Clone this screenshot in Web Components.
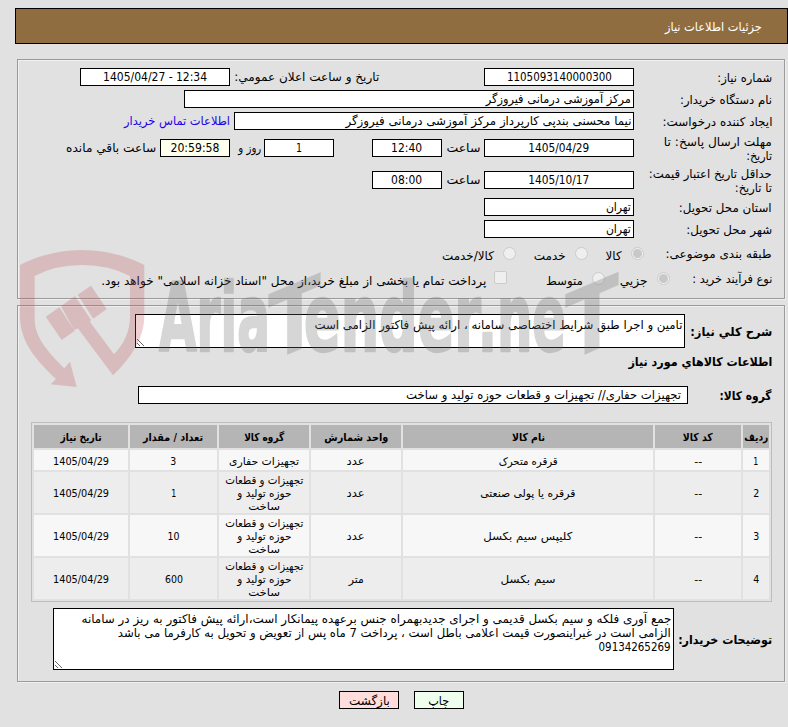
<!DOCTYPE html>
<html lang="fa" dir="rtl">
<head>
<meta charset="utf-8">
<title>جزئیات اطلاعات نیاز</title>
<style>
    body {
        margin: 0;
        background: #e1e1e1;
        color: #000;
        font-family: "DejaVu Sans Condensed", "DejaVu Sans", sans-serif;
        font-size: 12px;
        line-height: 14px;
    }
    need-page { --line: #000; }
    a { color: #2200e8; text-decoration: none; }
</style>
</head>
<body>
<need-page>
    <page-title slot="title"><fit-text w="97">جزئیات اطلاعات نیاز</fit-text></page-title>

    <field-panel style="height: 241px">
        <form-row h="22">
            <fit-text slot="label" w="55">شماره نیاز:</fit-text>
            <value-box w="150" center><fit-text w="105">1105093140000300</fit-text></value-box>
            <fit-text w="145" style="margin-right: 105px">تاریخ و ساعت اعلان عمومي:</fit-text>
            <value-box w="150" center style="margin-right: 4px"><fit-text w="104" dir="ltr">1405/04/27 - 12:34</fit-text></value-box>
        </form-row>
        <form-row h="22">
            <fit-text slot="label" w="92">نام دستگاه خریدار:</fit-text>
            <value-box w="450"><fit-text w="145">مرکز آموزشی درمانی فیروزگر</fit-text></value-box>
        </form-row>
        <form-row h="22">
            <fit-text slot="label" w="110">ایجاد کننده درخواست:</fit-text>
            <value-box w="400"><fit-text w="286">نیما محسنی بندپی کارپرداز مرکز آموزشی درمانی فیروزگر</fit-text></value-box>
            <a style="margin-right: 4px"><fit-text w="106">اطلاعات تماس خریدار</fit-text></a>
        </form-row>
        <form-row h="32">
            <fit-text slot="label" w="108">مهلت ارسال پاسخ: تا</fit-text>
            <fit-text slot="label" w="26">تاریخ:</fit-text>
            <value-box w="150" center><fit-text w="61">1405/04/29</fit-text></value-box>
            <fit-text w="34" style="margin-right: 4px">ساعت</fit-text>
            <value-box w="70" center style="margin-right: 4px"><fit-text w="31">12:40</fit-text></value-box>
            <value-box w="70" center style="margin-right: 38px"><fit-text w="6">1</fit-text></value-box>
            <fit-text w="23" style="margin-right: 3px">روز و</fit-text>
            <value-box w="70" center tone="cream" style="margin-right: 8px"><fit-text w="49">20:59:58</fit-text></value-box>
            <fit-text w="90" style="margin-right: 4px">ساعت باقي مانده</fit-text>
        </form-row>
        <form-row h="32">
            <fit-text slot="label" w="123">حداقل تاریخ اعتبار قیمت:</fit-text>
            <fit-text slot="label" w="37">تا تاریخ:</fit-text>
            <value-box w="150" center><fit-text w="61">1405/10/17</fit-text></value-box>
            <fit-text w="34" style="margin-right: 4px">ساعت</fit-text>
            <value-box w="70" center style="margin-right: 4px"><fit-text w="31">08:00</fit-text></value-box>
        </form-row>
        <form-row h="22">
            <fit-text slot="label" w="93">استان محل تحویل:</fit-text>
            <value-box w="150"><fit-text w="25">تهران</fit-text></value-box>
        </form-row>
        <form-row h="22">
            <fit-text slot="label" w="86">شهر محل تحویل:</fit-text>
            <value-box w="150"><fit-text w="25">تهران</fit-text></value-box>
        </form-row>
        <form-row h="27" label-width="128">
            <fit-text slot="label" w="106">طبقه بندی موضوعی:</fit-text>
            <choice-mark checked><fit-text w="16">کالا</fit-text></choice-mark>
            <choice-mark style="margin-right: 18px"><fit-text w="32">خدمت</fit-text></choice-mark>
            <choice-mark style="margin-right: 18px"><fit-text w="52">کالا/خدمت</fit-text></choice-mark>
        </form-row>
        <form-row h="23" label-width="102">
            <fit-text slot="label" w="80">نوع فرآیند خرید :</fit-text>
            <choice-mark checked><fit-text w="28">جزیي</fit-text></choice-mark>
            <choice-mark style="margin-right: 15px"><fit-text w="37">متوسط</fit-text></choice-mark>
            <choice-mark square style="margin-right: 39px"><fit-text w="385">پرداخت تمام یا بخشی از مبلغ خرید،از محل "اسناد خزانه اسلامی" خواهد بود.</fit-text></choice-mark>
        </form-row>
    </field-panel>

    <field-panel style="height: 378px">
        <form-row h="38" bold label-width="87">
            <fit-text slot="label" w="82">شرح كلي نیاز:</fit-text>
            <note-box w="550" h="34"><fit-text w="368">تامین و اجرا طبق شرایط اختصاصی سامانه ، ارائه پیش فاکتور الزامی است</fit-text></note-box>
        </form-row>
        <form-row h="22" bold label-width="145">
            <fit-text slot="label" w="144">اطلاعات کالاهاي مورد نیاز</fit-text>
        </form-row>
        <form-row h="46" bold label-width="84">
            <fit-text slot="label" w="52">گروه کالا:</fit-text>
            <value-box w="550" inset="6"><fit-text w="275">تجهیزات حفاری// تجهیزات و قطعات حوزه تولید و ساخت</fit-text></value-box>
        </form-row>
        <goods-table style="margin-top: 4px"></goods-table>
        <form-row h="62" bold label-width="98" style="margin-top: 6px">
            <fit-text slot="label" w="94">توضیحات خریدار:</fit-text>
            <note-box w="621" h="62">
                <fit-text w="590">جمع آوری فلکه و سیم بکسل قدیمی و اجرای جدیدبهمراه جنس برعهده پیمانکار است،ارائه پیش فاکتور به ریز در سامانه</fit-text>
                <fit-text w="553">الزامی است در غیراینصورت قیمت اعلامی باطل است ، پرداخت 7 ماه پس از تعویض و تحویل به کارفرما می باشد</fit-text>
                <fit-text w="72">09134265269</fit-text>
            </note-box>
        </form-row>
    </field-panel>

    <action-button slot="actions" w="50" tone="green"><fit-text w="21">چاپ</fit-text></action-button>
    <action-button slot="actions" w="60" tone="red"><fit-text w="41">بازگشت</fit-text></action-button>
</need-page>

<script>
function shadow(el, html) {
    const root = el.attachShadow({ mode: 'open' });
    const template = document.createElement('template');
    template.innerHTML = html;
    root.appendChild(template.content.cloneNode(true));
    return root;
}

class NeedPage extends HTMLElement {
    constructor() {
        super();
        shadow(this, `
            <style>
                :host { display: block; position: relative; width: 788px; height: 727px; overflow: hidden; }
                .title { padding: 8px 0 0 15px; }
                .panels { display: flex; flex-direction: column; gap: 5px; padding: 15px 2px 0 17px; }
                .actions { display: flex; justify-content: center; gap: 15px; padding: 8px 0 0 0; margin-left: 15px; }
            </style>
            <div class="title"><slot name="title"></slot></div>
            <div class="panels"><slot></slot></div>
            <div class="actions"><slot name="actions"></slot></div>
            <brand-watermark></brand-watermark>
        `);
    }
}

// One line of text squeezed or stretched to a given width
class FitText extends HTMLElement {
    constructor() {
        super();
        shadow(this, `
            <style>
                :host { display: inline-block; flex: none; white-space: nowrap; }
                span { display: inline-block; transform-origin: 100% 50%; }
            </style>
            <span><slot></slot></span>
        `);
    }

    connectedCallback() {
        const width = Number(this.getAttribute('w'));
        const span = this.shadowRoot.querySelector('span');
        this.style.width = width + 'px';
        this.style.direction = 'rtl';
        if (this.getAttribute('dir') === 'ltr') span.style.direction = 'ltr';
        const natural = span.getBoundingClientRect().width;
        if (natural > 0) span.style.transform = `scaleX(${width / natural})`;
    }
}

class PageTitle extends HTMLElement {
    constructor() {
        super();
        shadow(this, `
            <style>
                :host {
                    display: flex; align-items: center; box-sizing: border-box; height: 36px;
                    padding: 2px 25px 0 0; border: 1px solid #000;
                    background: #8f6d40; color: #fff;
                }
            </style>
            <slot></slot>
        `);
    }
}

class FieldPanel extends HTMLElement {
    constructor() {
        super();
        shadow(this, `
            <style>
                :host {
                    display: block; box-sizing: border-box; padding: 5px 11px 0 0;
                    border: 1px solid #9a9a9a;
                    box-shadow: 1px 1px 0 #f0f0f0, inset 1px 1px 0 #f0f0f0;
                    margin: 0 1px 1px 0;
                }
                div { padding: 1px 1px 0 0; }
            </style>
            <div><slot></slot></div>
        `);
        this.style.height = parseInt(this.style.height, 10) - 1 + 'px';
    }
}

class FormRow extends HTMLElement {
    constructor() {
        super();
        shadow(this, `
            <style>
                :host { display: flex; align-items: center; }
                .label { display: flex; flex-direction: column; align-items: flex-start; flex: none; padding-top: 1px; }
                :host([bold]) .label { font-weight: bold; }
            </style>
            <div class="label"><slot name="label"></slot></div>
            <slot></slot>
        `);
        this.style.height = this.getAttribute('h') + 'px';
        this.shadowRoot.querySelector('.label').style.width = (this.getAttribute('label-width') || 138) + 'px';
    }
}

class ValueBox extends HTMLElement {
    constructor() {
        super();
        shadow(this, `
            <style>
                :host {
                    display: flex; align-items: center; flex: none; box-sizing: border-box; height: 18px;
                    padding: 0 2px; border: 1px solid var(--line); background: #fff; color: #000;
                }
                :host([center]) { justify-content: center; }
                :host([tone="cream"]) { background: #ffffee; }
            </style>
            <slot></slot>
        `);
        this.style.width = this.getAttribute('w') + 'px';
        if (this.hasAttribute('inset')) this.style.paddingRight = this.getAttribute('inset') + 'px';
    }
}

class NoteBox extends HTMLElement {
    constructor() {
        super();
        shadow(this, `
            <style>
                :host {
                    display: flex; flex-direction: column; align-items: flex-start; flex: none;
                    position: relative; box-sizing: border-box; padding: 3px 2px;
                    border: 1px solid var(--line); background: #fff;
                }
                svg { position: absolute; left: 1px; bottom: 1px; }
            </style>
            <slot></slot>
            <svg width="8" height="8" viewBox="0 0 8 8"><path d="M0 1l7 7M0 5l3 3" stroke="#555" stroke-width=".9"/></svg>
        `);
        this.style.width = this.getAttribute('w') + 'px';
        this.style.height = this.getAttribute('h') + 'px';
    }
}

// Disabled radio button or checkbox with its caption
class ChoiceMark extends HTMLElement {
    constructor() {
        super();
        shadow(this, `
            <style>
                :host { display: flex; align-items: center; gap: 9px; }
                i {
                    display: flex; align-items: center; justify-content: center; box-sizing: border-box;
                    width: 13px; height: 13px; border: 1px solid #cbcbcb; border-radius: 50%; background: #efefef;
                }
                :host([square]) { gap: 8px; }
                :host([square]) i { border-radius: 2px; margin-bottom: 2px; }
                :host([checked]) i::before { content: ""; width: 9px; height: 9px; border-radius: 50%; background: #c8c8c8; }
                .text { padding-top: 4px; }
            </style>
            <i></i><div class="text"><slot></slot></div>
        `);
    }
}

class GoodsTable extends HTMLElement {
    constructor() {
        super();
        const long = [['تجهیزات و قطعات', 78], ['حوزه تولید و', 54], ['ساخت', 32]];
        const rows = [
            [[['1', 5]], [['قرقره متحرک', 59]], [['عدد', 18]], [['تجهیزات حفاری', 70]], [['3', 6]]],
            [[['2', 6]], [['قرقره یا پولی صنعتی', 95]], [['عدد', 18]], long, [['1', 5]]],
            [[['3', 6]], [['کلیپس سیم بکسل', 89]], [['عدد', 18]], long, [['10', 12]]],
            [[['4', 6]], [['سیم بکسل', 55]], [['متر', 15]], long, [['600', 18]]]
        ];
        const head = [['ردیف', 24], ['کد کالا', 30], ['نام کالا', 33], ['واحد شمارش', 64],
            ['گروه کالا', 40], ['تعداد / مقدار', 60], ['تاریخ نیاز', 41]];
        const fit = ([text, w]) => `<fit-text w="${w}">${text}</fit-text>`;
        const cell = (lines) => `<div>${lines.map(fit).join('')}</div>`;

        shadow(this, `
            <style>
                :host {
                    display: grid; gap: 2px; box-sizing: border-box; width: 741px; height: 180px; padding: 2px;
                    grid-template-columns: 26px 86px 250px 90px 90px 87px 94px;
                    grid-template-rows: 23px 20px 41px 41px 41px;
                    border: 1px solid #bdbdbd; font-size: 11px; line-height: 13px;
                }
                div {
                    display: flex; flex-direction: column; align-items: center; justify-content: center;
                    box-sizing: border-box; padding-top: 2px; background: #f7f7f7;
                }
                .head { background: #b5b5b5; font-weight: bold; }
                .alt div { background: #ededed; }
                section { display: contents; }
            </style>
            ${head.map((h) => `<div class="head">${fit(h)}</div>`).join('')}
            ${rows.map((r, i) => `<section class="${i % 2 ? 'alt' : ''}">
                ${cell(r[0])}${cell([['--', 8]])}${r.slice(1).map(cell).join('')}${cell([['1405/04/29', 56]])}
            </section>`).join('')}
        `);
    }
}

class ActionButton extends HTMLElement {
    constructor() {
        super();
        shadow(this, `
            <style>
                :host {
                    display: flex; align-items: center; justify-content: center; box-sizing: border-box;
                    height: 18px; padding-top: 2px; border: 1px solid #000; background: #eeffee; cursor: pointer;
                }
                :host([tone="red"]) { background: #ffdddd; }
            </style>
            <slot></slot>
        `);
        this.style.width = this.getAttribute('w') + 'px';
    }
}

// Translucent logo lying over both panels
class BrandWatermark extends HTMLElement {
    constructor() {
        super();
        shadow(this, `
            <style>
                :host { position: absolute; left: 0; top: 240px; direction: ltr; pointer-events: none; }
                svg { display: block; }
                text { font: bold 94px "DejaVu Sans Condensed", "DejaVu Sans", sans-serif; }
            </style>
            <svg width="640" height="155" viewBox="0 240 640 155">
                <g fill="#be5055" opacity=".25">
                    <path d="M20 265Q49 250 82 250T144.300 265V316C144.300 338 131 358 113 375.300L78 328.500 74 329.700 61 306.300 75 296 91 320 90 322 114 354.300C124 344 130 331 130 317V276Q109 265 82 265T34.700 276V320C35 338 49 353 64.300 368.300L70 361.700 76.700 387 50.700 384.300 56 379C36 360 20 342 20 316Z"/>
                    <path d="M45.700 316.700L59.300 307.300 74.700 330.700 61.700 340ZM77.700 294.700L91 285.700 106.700 309 93.300 318.700Z"/>
                </g>
                <g fill="#6e6e6e" stroke="#6e6e6e" stroke-width="2.500" stroke-linejoin="round" opacity=".28">
                    <text x="159" y="351" textLength="111" lengthAdjust="spacingAndGlyphs">Aria</text>
                    <text transform="translate(268 363) skewY(-23)" x="0" y="0" textLength="53" lengthAdjust="spacingAndGlyphs" stroke="none">T</text>
                    <text x="304" y="351" textLength="177" lengthAdjust="spacingAndGlyphs">ender</text>
                    <text x="478" y="351" textLength="88" lengthAdjust="spacingAndGlyphs">.ne</text>
                    <text transform="translate(565 363) skewY(-23)" x="0" y="0" textLength="54" lengthAdjust="spacingAndGlyphs" stroke="none">T</text>
                </g>
            </svg>
        `);
    }
}

customElements.define('fit-text', FitText);
customElements.define('page-title', PageTitle);
customElements.define('value-box', ValueBox);
customElements.define('note-box', NoteBox);
customElements.define('choice-mark', ChoiceMark);
customElements.define('form-row', FormRow);
customElements.define('field-panel', FieldPanel);
customElements.define('goods-table', GoodsTable);
customElements.define('action-button', ActionButton);
customElements.define('brand-watermark', BrandWatermark);
customElements.define('need-page', NeedPage);

// Bold rows get their weight once their shadow roots exist, so measure again
document.querySelectorAll('fit-text').forEach((el) => {
    el.shadowRoot.querySelector('span').style.transform = '';
    el.connectedCallback();
});
</script>
</body>
</html>
